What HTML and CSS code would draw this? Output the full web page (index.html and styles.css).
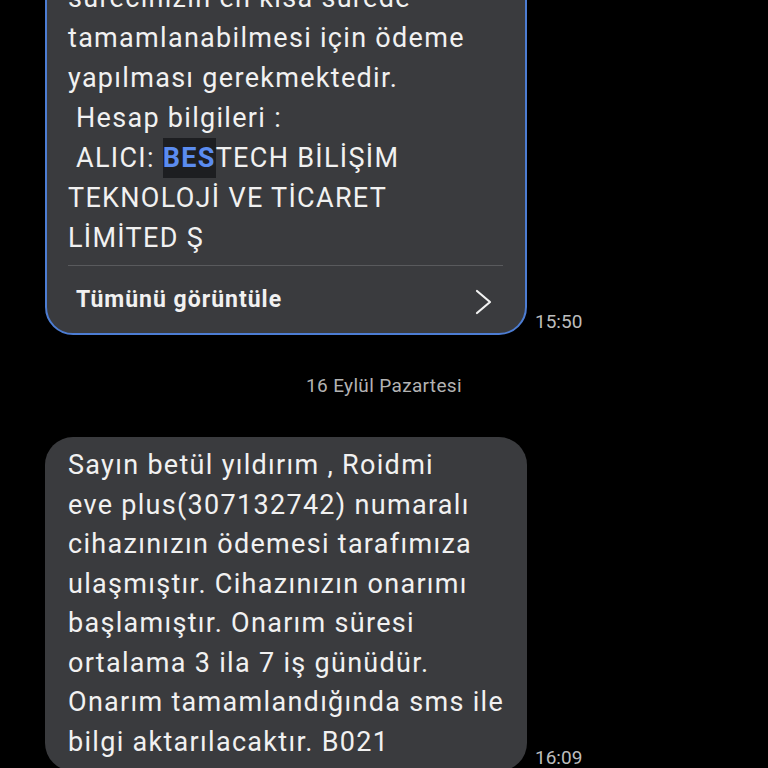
FILE: index.html
```html
<!DOCTYPE html>
<html lang="tr">
<head>
    <meta charset="UTF-8">
    <title>Mesajlar</title>
    <link rel="stylesheet" href="styles.css">
</head>
<body>
    <div class="chat">
        <div class="row row-first">
            <div class="bubble bubble-selected">
                <p class="text">sürecinizin en kısa sürede<br>tamamlanabilmesi için ödeme<br>yapılması gerekmektedir.<br>&nbsp;Hesap bilgileri :<br>&nbsp;ALICI: <span class="hit">BES</span>TECH BİLİŞİM<br>TEKNOLOJİ VE TİCARET<br>LİMİTED Ş</p>
                <div class="more">
                    <span class="more-label">Tümünü görüntüle</span>
                    <svg class="chevron" width="17" height="26" viewBox="0 0 17 26">
                        <polyline points="2,2 15,13 2,24" fill="none" stroke="#f2f2f2" stroke-width="2.2" stroke-linecap="round" stroke-linejoin="round"/>
                    </svg>
                </div>
            </div>
            <span class="time">15:50</span>
        </div>

        <div class="date">16 Eylül Pazartesi</div>

        <div class="row">
            <div class="bubble">
                <p class="text">Sayın betül yıldırım , Roidmi<br>eve plus(307132742) numaralı<br>cihazınızın ödemesi tarafımıza<br>ulaşmıştır. Cihazınızın onarımı<br>başlamıştır. Onarım süresi<br>ortalama 3 ila 7 iş günüdür.<br>Onarım tamamlandığında sms ile<br>bilgi aktarılacaktır. B021</p>
            </div>
            <span class="time">16:09</span>
        </div>
    </div>
</body>
</html>
```

FILE: styles.css
```css
*{
    padding: 0;
    margin: 0;
    box-sizing: border-box;
}
html,body{
    background-color: #000;
    height: 100%;
    overflow: hidden;
}
body{
    font-family: Roboto, "Noto Sans", sans-serif;
    color: #f1f1f1;
}
.chat{
    padding-left: 45px;
}
.row{
    display: flex;
    align-items: flex-end;
    gap: 8px;
}
.row-first{
    margin-top: -33px;
}
.bubble{
    width: 482px;
    background-color: #3a3b3e;
    border-radius: 28px;
    padding: 9px 22px 9px 23px;
}
.bubble-selected{
    border: 2px solid #4d7dd3;
    padding: 9px 22px 0 21px;
}
.text{
    font-size: 27px;
    line-height: 39.5px;
    letter-spacing: 1.3px;
    white-space: nowrap;
}
.bubble-selected .text{
    line-height: 40px;
}
.hit{
    display: inline-block;
    background-color: #1d1e21;
    color: #5b8cf0;
    font-weight: bold;
    line-height: 40px;
    vertical-align: top;
}
.more{
    margin-top: 7px;
    border-top: 1px solid #595a5d;
    height: 68px;
    display: flex;
    align-items: center;
    justify-content: space-between;
    padding: 0 11px 0 8px;
}
.more-label{
    font-size: 23px;
    font-weight: bold;
    letter-spacing: 1px;
}
.chevron{
    display: block;
    margin-top: 4px;
}
.time{
    font-size: 19px;
    color: #bdbdbd;
    line-height: 24px;
    margin-bottom: 1px;
}
.date{
    margin: 39px 0 39px;
    text-align: center;
    padding-right: 45px;
    font-size: 19px;
    line-height: 24px;
    letter-spacing: 0.35px;
    color: #b3b3b3;
}
```
